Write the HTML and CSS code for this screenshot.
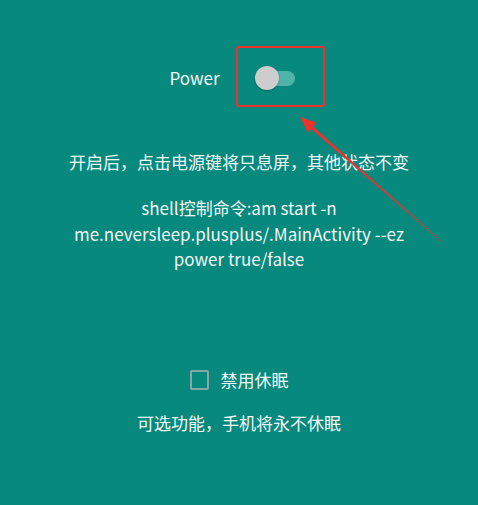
FILE: index.html
```html
<!DOCTYPE html>
<html lang="zh">
<head>
<meta charset="utf-8">
<link rel="stylesheet" href="styles.css">
</head>
<body>
<main class="screen">
  <div class="power-row">
    <span class="power-label">Power</span>
    <span class="switch"><span class="track"></span><span class="thumb"></span></span>
  </div>
  <p class="desc">开启后，点击电源键将只息屏，其他状态不变</p>
  <p class="shell">shell控制命令:am start -n<br>me.neversleep.plusplus/.MainActivity --ez<br>power true/false</p>
  <label class="check-row"><span class="checkbox"></span><span class="check-label">禁用休眠</span></label>
  <p class="note">可选功能，手机将永不休眠</p>

  <div class="highlight"></div>
  <svg class="arrow" width="478" height="505" viewBox="0 0 478 505">
    <polygon points="442.3,241.9 441.8,242.3 311,128.7 313,126.5" fill="#f0302a"/>
    <polygon points="300,117 316.5,122.8 308,132.5" fill="#f0302a"/>
  </svg>
</main>
</body>
</html>
```

FILE: styles.css
```css
html, body {
  margin: 0;
  padding: 0;
}
body {
  background: #07897e;
  font-family: "Noto Sans CJK SC", "Noto Sans", sans-serif;
  color: #f2f7f6;
}
.screen {
  position: relative;
  width: 478px;
  height: 505px;
  overflow: hidden;
  display: flex;
  flex-direction: column;
  align-items: center;
  padding-top: 66px;
  box-sizing: border-box;
}
.power-row {
  display: flex;
  align-items: center;
  height: 24px;
  gap: 35px;
  padding-right: 14px;
}
.power-label {
  font-size: 17px;
  line-height: 24px;
}
.switch {
  position: relative;
  width: 40px;
  height: 24px;
  display: block;
}
.track {
  position: absolute;
  left: 5px;
  top: 5px;
  width: 35px;
  height: 15px;
  border-radius: 8px;
  background: #4fb3aa;
}
.thumb {
  position: absolute;
  left: 0;
  top: 0;
  width: 24px;
  height: 24px;
  border-radius: 50%;
  background: #cdcdcd;
  box-shadow: 0 1px 2px rgba(0,0,0,0.25);
}
.desc {
  margin: 60px 0 0;
  font-size: 17px;
  line-height: 24px;
  text-align: center;
}
.shell {
  margin: 21px 0 0;
  font-size: 17px;
  line-height: 25.5px;
  text-align: center;
}
.check-row {
  margin-top: 96px;
  display: flex;
  align-items: center;
  gap: 12px;
  height: 24px;
}
.checkbox {
  width: 15px;
  height: 16px;
  border: 2.5px solid #86a7a3;
  border-radius: 2px;
  display: block;
}
.check-label {
  font-size: 17px;
  line-height: 24px;
}
.note {
  margin: 19px 0 0;
  font-size: 17px;
  line-height: 24px;
  text-align: center;
}
.highlight {
  position: absolute;
  left: 236px;
  top: 46px;
  width: 85px;
  height: 57px;
  border: 2.5px solid #f0302a;
  border-radius: 3px;
}
.arrow {
  position: absolute;
  left: 0;
  top: 0;
}
```
